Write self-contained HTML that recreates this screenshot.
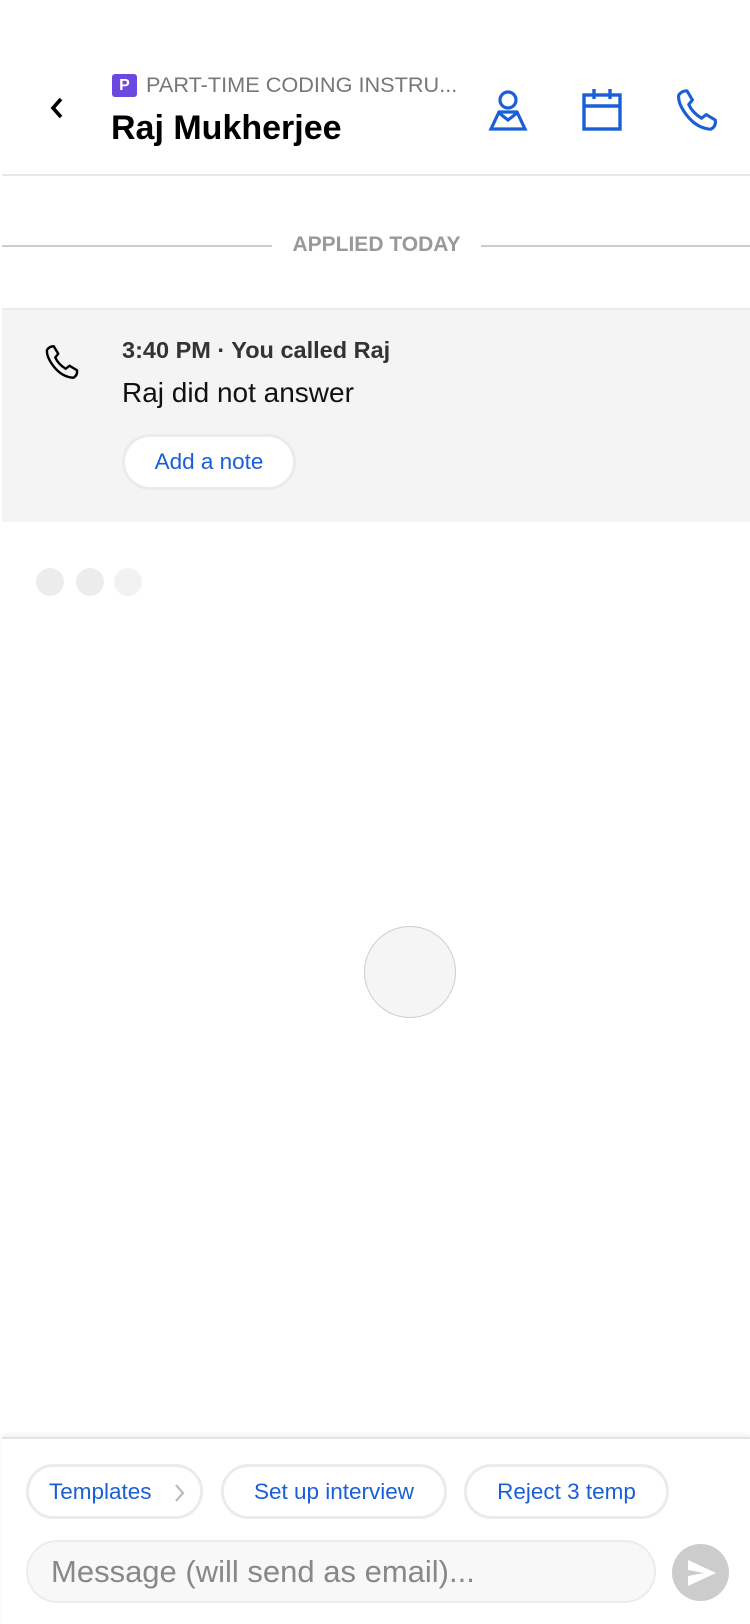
<!DOCTYPE html>
<html><head><meta charset="utf-8"><style>
*{margin:0;padding:0;box-sizing:border-box}
body{width:750px;height:1624px;background:#fff;font-family:"Liberation Sans",Arial,sans-serif;position:relative;overflow:hidden}
.a{position:absolute}
.chip{position:absolute;top:1464px;height:55px;border:3px solid #ebebeb;border-radius:28px;background:#fff;color:#1a5fd6;font-size:22.5px;line-height:49px;text-align:center}
</style></head><body>
<svg class="a" style="left:47px;top:95px" width="20" height="26" viewBox="0 0 20 26"><path d="M14 4 L6 13 L14 22" fill="none" stroke="#000" stroke-width="3.6"/></svg>
<div class="a" style="left:112px;top:74px;width:25px;height:23px;background:#6b48e0;border-radius:3px;color:#fff;font-size:16px;font-weight:bold;text-align:center;line-height:23px">P</div>
<div class="a" style="left:146px;top:73px;font-size:21.7px;color:#777;line-height:24px">PART-TIME CODING INSTRU...</div>
<div class="a" style="left:111px;top:108px;font-size:34px;font-weight:bold;color:#000;line-height:40px">Raj Mukherjee</div>
<svg class="a" style="left:486px;top:88px" width="44" height="44" viewBox="0 0 44 44" fill="none" stroke="#1a5fd6" stroke-width="3.2"><circle cx="22" cy="12" r="8"/><path d="M13 24 L31 24 L39 41 L5 41 Z"/><path d="M13 25 L22 32 L31 25"/></svg>
<svg class="a" style="left:581px;top:86px" width="42" height="46" viewBox="0 0 42 46" fill="none" stroke="#1a5fd6" stroke-width="3.4"><rect x="3" y="9" width="36" height="34"/><path d="M3 20 H39"/><path d="M13 3 V13 M29 3 V13"/></svg>
<svg class="a" style="left:675px;top:88px" width="44" height="44" viewBox="0 0 24 24" fill="none" stroke="#1a5fd6" stroke-width="1.7" stroke-linejoin="round"><path d="M6.5 1.5 L9.5 6.5 L7.5 9 Q9.5 13.5 14.5 16.5 L17 14.5 L22 17.5 Q22.5 21 19.5 22.5 Q12 22 6.5 15 Q1.5 8.5 2 4 Q3.5 1.5 6.5 1.5 Z"/></svg>
<div class="a" style="left:2px;top:174px;width:748px;height:2px;background:#e8e8e8"></div>
<div class="a" style="left:2px;top:245px;width:270px;height:2px;background:#ccc"></div>
<div class="a" style="left:481px;top:245px;width:269px;height:2px;background:#ccc"></div>
<div class="a" style="left:272px;top:232px;width:209px;text-align:center;font-size:21px;font-weight:bold;color:#999;line-height:26px">APPLIED TODAY</div>
<div class="a" style="left:2px;top:308px;width:748px;height:214px;background:#f4f4f4;border-top:2px solid #ebebeb"></div>
<svg class="a" style="left:44px;top:344px" width="36" height="36" viewBox="0 0 24 24" fill="none" stroke="#000" stroke-width="1.6" stroke-linejoin="round"><path d="M6.5 1.5 L9.5 6.5 L7.5 9 Q9.5 13.5 14.5 16.5 L17 14.5 L22 17.5 Q22.5 21 19.5 22.5 Q12 22 6.5 15 Q1.5 8.5 2 4 Q3.5 1.5 6.5 1.5 Z"/></svg>
<div class="a" style="left:122px;top:337px;font-size:23.5px;font-weight:bold;color:#333;line-height:26px">3:40 PM · You called Raj</div>
<div class="a" style="left:122px;top:377px;font-size:28px;color:#111;line-height:32px">Raj did not answer</div>
<div class="a" style="left:122px;top:434px;width:174px;height:56px;border:3px solid #ebebeb;border-radius:28px;background:#fff;color:#1a5fd6;font-size:22.5px;line-height:50px;text-align:center">Add a note</div>
<div class="a" style="left:36px;top:568px;width:28px;height:28px;border-radius:50%;background:#ececec"></div>
<div class="a" style="left:76px;top:568px;width:28px;height:28px;border-radius:50%;background:#ececec"></div>
<div class="a" style="left:114px;top:568px;width:28px;height:28px;border-radius:50%;background:#f2f2f2"></div>
<div class="a" style="left:364px;top:926px;width:92px;height:92px;border-radius:50%;background:#f5f5f5;border:1.5px solid #ccc"></div>
<div class="a" style="left:2px;top:1437px;width:748px;height:187px;background:#fff;border-top:2px solid #e4e4e4;box-shadow:0 -3px 4px rgba(0,0,0,0.05)"></div>
<div class="chip" style="left:26px;width:177px;text-align:left;padding-left:20px">Templates<svg style="position:absolute;left:145px;top:16px" width="12" height="20" viewBox="0 0 12 20"><path d="M2 2 L9 10 L2 18" fill="none" stroke="#bbb" stroke-width="2.2"/></svg></div>
<div class="chip" style="left:221px;width:226px">Set up interview</div>
<div class="chip" style="left:464px;width:205px">Reject 3 temp</div>
<div class="a" style="left:26px;top:1540px;width:630px;height:63px;border:2px solid #ececec;border-radius:32px;background:#f8f8f8;color:#888;font-size:31px;line-height:59px;padding-left:23px">Message (will send as email)...</div>
<div class="a" style="left:672px;top:1544px;width:57px;height:57px;border-radius:50%;background:#ccc"></div>
<svg class="a" style="left:686px;top:1558px" width="32" height="30" viewBox="0 0 32 30"><path d="M2 2 L30 15 L2 28 L2 18 L18 15 L2 12 Z" fill="#fff"/></svg>
</body></html>
